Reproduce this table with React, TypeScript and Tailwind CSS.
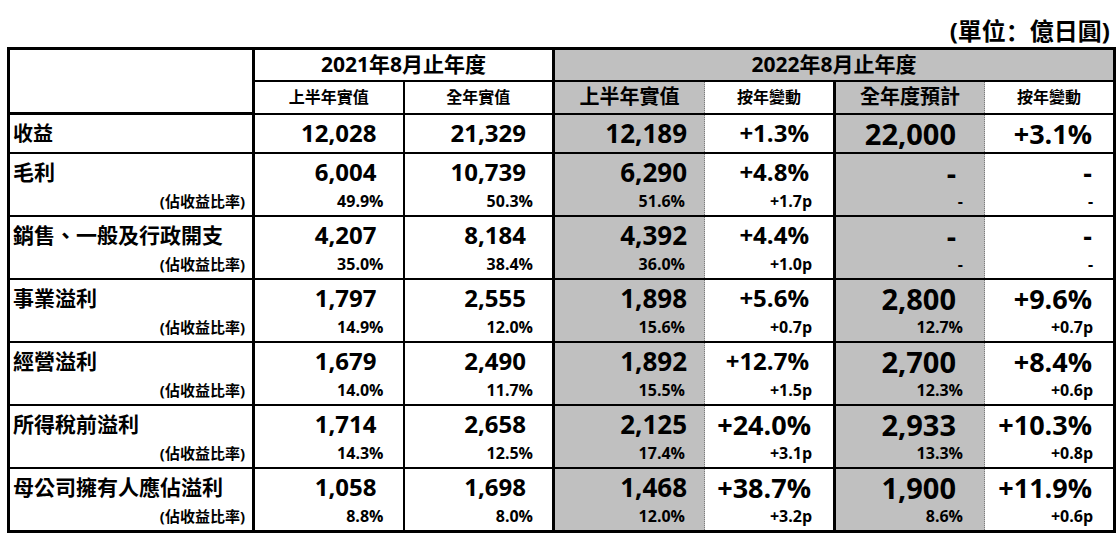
import React from "react";

type Cell = [string, string?];

const rows: { label: string; cells: Cell[] }[] = [
  { label: "收益", cells: [["12,028"], ["21,329"], ["12,189"], ["+1.3%"], ["22,000"], ["+3.1%"]] },
  { label: "毛利", cells: [["6,004", "49.9%"], ["10,739", "50.3%"], ["6,290", "51.6%"], ["+4.8%", "+1.7p"], ["-", "-"], ["-", "-"]] },
  { label: "銷售、一般及行政開支", cells: [["4,207", "35.0%"], ["8,184", "38.4%"], ["4,392", "36.0%"], ["+4.4%", "+1.0p"], ["-", "-"], ["-", "-"]] },
  { label: "事業溢利", cells: [["1,797", "14.9%"], ["2,555", "12.0%"], ["1,898", "15.6%"], ["+5.6%", "+0.7p"], ["2,800", "12.7%"], ["+9.6%", "+0.7p"]] },
  { label: "經營溢利", cells: [["1,679", "14.0%"], ["2,490", "11.7%"], ["1,892", "15.5%"], ["+12.7%", "+1.5p"], ["2,700", "12.3%"], ["+8.4%", "+0.6p"]] },
  { label: "所得稅前溢利", cells: [["1,714", "14.3%"], ["2,658", "12.5%"], ["2,125", "17.4%"], ["+24.0%", "+3.1p"], ["2,933", "13.3%"], ["+10.3%", "+0.8p"]] },
  { label: "母公司擁有人應佔溢利", cells: [["1,058", "8.8%"], ["1,698", "8.0%"], ["1,468", "12.0%"], ["+38.7%", "+3.2p"], ["1,900", "8.6%"], ["+11.9%", "+0.6p"]] },
];

const gray = "bg-[#c0c0c0] border-l-[3px] border-l-black border-r border-r-[#7a7a7a] [border-right-style:dotted]!";
const white = "border-l border-l-[#7a7a7a] [border-left-style:dotted]! border-r-[3px] border-r-black";

// per column: cell borders, big line size + padding, small line padding
const cols = [
  { td: "border-l-[3px] border-l-black border-r-2 border-r-black", big: "text-[24px] pr-[26px]", small: "pr-[19px]" },
  { td: "border-l-2 border-l-black border-r-[3px] border-r-black", big: "text-[24px] pr-[26px]", small: "pr-[19px]" },
  { td: gray, big: "text-[26px] pr-[17px]", small: "pr-[19px]" },
  { td: white, big: "text-[24px] pr-[24px]", small: "pr-[21px]" },
  { td: gray, big: "text-[29px] pr-[28px]", small: "pr-[21px]" },
  { td: white, big: "text-[27px] pr-[21px]", small: "pr-[20px]" },
];

export default function App() {
  return (
    <div className="w-[1120px] h-[538px] bg-white text-black font-bold font-['Open_Sans','Noto_Sans_CJK_TC',sans-serif]">
      <div className="h-[47px] flex items-end justify-end pr-[10px] pb-[4px] text-[24px] leading-none">
        (單位<span className="font-['Noto_Sans_CJK_SC',sans-serif]">：</span>億日圓)
      </div>

      <table className="ml-[7px] w-[1106px] table-fixed border-collapse border-[3px] border-black">
        <colgroup>
          <col className="w-[245px]" />
          <col className="w-[150px]" />
          <col className="w-[150px]" />
          <col className="w-[151px]" />
          <col className="w-[130px]" />
          <col className="w-[150px]" />
          <col className="w-[130px]" />
        </colgroup>
        <thead>
          <tr className="h-[32px] text-[21px] leading-none">
            <th rowSpan={2} className="border-[3px] border-black"></th>
            <th colSpan={2} className="border-[3px] border-b-2 border-black font-bold">2021年8月止年度</th>
            <th colSpan={4} className="bg-[#c0c0c0] border-[3px] border-b-2 border-black font-bold">2022年8月止年度</th>
          </tr>
          <tr className="h-[33px] text-center leading-none">
            <th className="border-2 border-l-[3px] border-black text-[16px] font-bold">上半年實值</th>
            <th className="border-2 border-r-[3px] border-black text-[16px] font-bold">全年實值</th>
            <th className={`border-y-2 border-t-black border-b-black text-[20px] font-bold ${gray}`}>上半年實值</th>
            <th className={`border-y-2 border-t-black border-b-black text-[16px] font-bold ${white}`}>按年變動</th>
            <th className={`border-y-2 border-t-black border-b-black text-[20px] font-bold ${gray}`}>全年度預計</th>
            <th className={`border-y-2 border-t-black border-b-black text-[16px] font-bold ${white}`}>按年變動</th>
          </tr>
        </thead>
        <tbody>
          {rows.map((r, i) => {
            const single = r.cells[0].length === 1;
            return (
              <tr key={r.label} className={single ? "h-[39px]" : "h-[63px]"}>
                <td className="border-y-2 border-r-[3px] border-black p-0 align-top">
                  {single ? (
                    <div className="h-[37px] flex items-center pl-[3px] text-[20px] leading-none">{r.label}</div>
                  ) : (
                    <div className="flex flex-col">
                      <div className="h-[36px] flex items-center pl-[3px] text-[21px] leading-none">{r.label}</div>
                      <div className="h-[22px] flex items-center justify-end pr-[7px] text-[15px] leading-none">(佔收益比率)</div>
                    </div>
                  )}
                </td>
                {r.cells.map((c, j) => (
                  <td key={j} className={`border-y-2 border-t-black border-b-black p-0 align-top ${cols[j].td}`}>
                    {single ? (
                      <div className={`h-[37px] flex items-center justify-end leading-none ${cols[j].big}`}>{c[0]}</div>
                    ) : (
                      <div className="flex flex-col">
                        <div className={`h-[36px] flex items-center justify-end leading-none ${j === 3 && i >= 5 ? "text-[27px] pr-[22px]" : cols[j].big}`}>{c[0]}</div>
                        <div className={`h-[22px] flex items-center justify-end text-[16px] leading-none ${cols[j].small}`}>{c[1]}</div>
                      </div>
                    )}
                  </td>
                ))}
              </tr>
            );
          })}
        </tbody>
      </table>
    </div>
  );
}
